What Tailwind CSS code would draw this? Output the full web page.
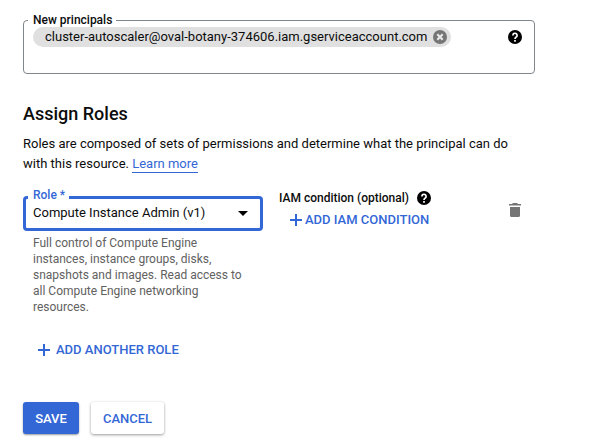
<!DOCTYPE html>
<html lang="en">
<head>
<meta charset="utf-8">
<title>Assign Roles</title>
<script src="https://cdn.jsdelivr.net/npm/@tailwindcss/browser@4"></script>
</head>
<body class="h-[444px] overflow-hidden bg-white font-[Roboto,sans-serif] text-[13px] text-[#0c0c0c]">
<main class="pl-[23px] pt-[14px]">
  <fieldset class="h-[60px] w-[512px] rounded-[4px] border border-[#80868b] pl-[4px]">
    <legend class="h-[13px] whitespace-nowrap pl-[5px] pr-[4px] text-[12px] font-medium leading-[13px]">New principals</legend>
    <div class="flex items-center justify-between pl-[5px] pr-[12px]">
      <div class="flex h-5 w-[418px] items-center justify-between rounded-full bg-[#e0e0e0] pl-3 pr-1">
        <span class="whitespace-nowrap">cluster-autoscaler@oval-botany-374606.iam.gserviceaccount.com</span>
        <svg class="size-[14px] shrink-0" viewBox="0 0 14 14"><circle cx="7" cy="7" r="7" fill="#757575"/><path d="M4.300 4.300l5.400 5.400M9.700 4.300l-5.400 5.400" stroke="#e8e8e8" stroke-width="2.200"/></svg>
      </div>
      <svg class="size-[14px]" viewBox="0 0 14 14"><circle cx="7" cy="7" r="7" fill="#000"/><path d="M4.900 5.400a2.100 2.100 0 1 1 3.300 1.700Q7 7.800 7 9M7 10v1.700" fill="none" stroke="#fff" stroke-width="1.700"/></svg>
    </div>
  </fieldset>
  <h1 class="mt-[28px] text-[18px] font-medium leading-6">Assign Roles</h1>
  <p class="mt-[8px] whitespace-nowrap leading-5">Roles are composed of sets of permissions and determine what the principal can do<br>with this resource. <a class="inline-block h-[19px] border-b border-[#3367d6] text-[#3367d6]">Learn more</a></p>
  <section class="mt-[15px] flex h-[126px]">
    <div class="w-[240px]">
      <fieldset class="h-[42px] rounded-[4px] border-[3px] border-[#3367d6] pl-[2px]">
        <legend class="h-[17px] whitespace-nowrap pl-[5px] pr-[4px] text-[12px] font-medium leading-[13px] text-[#3367d6]">Role *</legend>
        <div class="flex h-[14px] items-center justify-between pl-[5px] pr-[12px]">
          <span class="leading-[14px]">Compute Instance Admin (v1)</span>
          <svg class="h-[5px] w-[10px]" viewBox="0 0 10 5"><path d="M0 0h10L5 5z"/></svg>
        </div>
      </fieldset>
      <p class="mt-[4px] whitespace-nowrap pl-[10px] text-[12px] leading-4 text-[#616161]">Full control of Compute Engine<br>instances, instance groups, disks,<br>snapshots and images. Read access to<br>all Compute Engine networking<br>resources.</p>
    </div>
    <div class="ml-4 w-[230px]">
      <div class="flex h-[18px] items-center gap-[8px] whitespace-nowrap text-[12px] font-medium">IAM condition (optional)
        <svg class="size-[14px]" viewBox="0 0 14 14"><circle cx="7" cy="7" r="7" fill="#000"/><path d="M4.900 5.400a2.100 2.100 0 1 1 3.300 1.700Q7 7.800 7 9M7 10v1.700" fill="none" stroke="#fff" stroke-width="1.700"/></svg>
      </div>
      <button class="ml-[11px] mt-[3px] flex h-5 items-center gap-[3px] whitespace-nowrap font-medium text-[#3367d6]"><svg class="size-3" viewBox="0 0 12 12"><path d="M0 6h12M6 0v12" stroke="currentColor" stroke-width="2"/></svg>ADD IAM CONDITION</button>
    </div>
    <svg class="mt-[14px] h-[14px] w-3" viewBox="0 0 12 14" fill="#757575"><path d="M0 1h3l1-1h4l1 1h3v1.500H0zM1 4h10v8.500q0 1.500-1.500 1.500h-7Q1 14 1 12.500z"/></svg>
  </section>
  <button class="ml-[15px] mt-[25px] flex h-5 items-center gap-[6px] whitespace-nowrap font-medium text-[#3367d6]"><svg class="size-3" viewBox="0 0 12 12"><path d="M0 6h12M6 0v12" stroke="currentColor" stroke-width="2"/></svg>ADD ANOTHER ROLE</button>
  <div class="mt-[42px] flex gap-3 text-[13px] font-medium">
    <button class="h-8 w-14 rounded-[3px] bg-[#3367d6] pt-px text-white shadow-[0_1px_2px_rgba(0,0,0,0.4)]">SAVE</button>
    <button class="h-8 w-[73px] rounded-[3px] bg-white pt-px text-[#3367d6] shadow-[0_1px_3px_rgba(0,0,0,0.4)]">CANCEL</button>
  </div>
</main>
</body>
</html>
